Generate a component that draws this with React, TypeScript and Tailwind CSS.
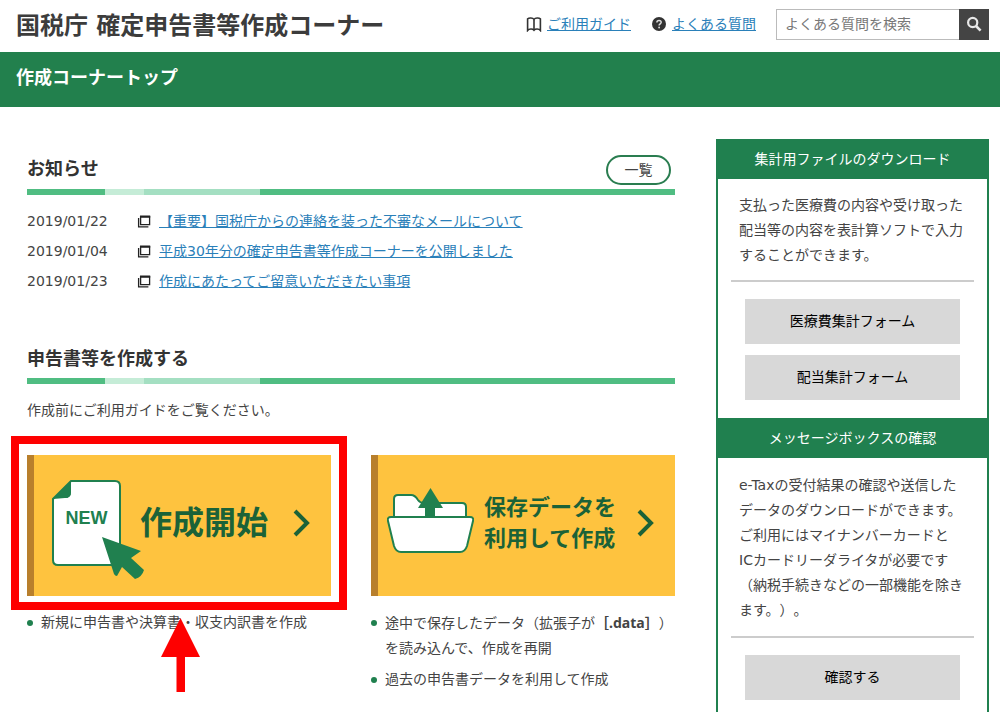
import type { ReactNode } from "react";

const notices = [
  { date: "2019/01/22", title: "【重要】国税庁からの連絡を装った不審なメールについて" },
  { date: "2019/01/04", title: "平成30年分の確定申告書等作成コーナーを公開しました" },
  { date: "2019/01/23", title: "作成にあたってご留意いただきたい事項" },
];

function BookIcon() {
  return (
    <svg width="16" height="16" viewBox="0 0 16 16" fill="none" stroke="#333" strokeWidth="1.6" aria-hidden="true">
      <path d="M8 3.4C6.8 1.7 3 1.7 1.600 2.800V14.400C3 12.600 6.800 12.600 8 14.200C9.200 12.600 13 12.600 14.400 14.400V2.800C13 1.700 9.200 1.700 8 3.400Z" />
      <path d="M8 3.400V14" />
    </svg>
  );
}

function QuestionIcon() {
  return (
    <svg width="16" height="16" viewBox="0 0 16 16" aria-hidden="true">
      <circle cx="8" cy="8" r="7" fill="#333" />
      <path d="M5.900 6.500C5.900 3.700 10.200 3.800 10.200 6.300C10.200 7.800 8.100 7.800 8.100 9.500" fill="none" stroke="#ddd" strokeWidth="1.500" />
      <circle cx="8.100" cy="11.500" r="0.900" fill="#ddd" />
    </svg>
  );
}

function SearchIcon() {
  return (
    <svg width="16" height="16" viewBox="0 0 16 16" fill="none" stroke="#e8e8e8" aria-hidden="true">
      <circle cx="6.700" cy="6.500" r="4.600" strokeWidth="2.200" />
      <path d="M10 10L14.600 14.600" strokeWidth="2.600" />
    </svg>
  );
}

function WindowIcon() {
  return (
    <svg width="14" height="14" viewBox="0 0 14 14" fill="none" stroke="#222" aria-hidden="true">
      <path d="M3.600 2.600H12.600V10.600H3.600Z" strokeWidth="1.300" />
      <path d="M3 2.600H13.200" strokeWidth="2.200" />
      <path d="M1.600 4V12.800H11.400" strokeWidth="1.300" />
    </svg>
  );
}

function NewDocumentIcon() {
  return (
    <svg width="84" height="102" viewBox="0 0 84 102" className="mt-4 shrink-0 overflow-visible" aria-hidden="true">
      <path d="M19 1H63Q68 1 68 6V80Q68 85 63 85H6Q1 85 1 80V19Z" fill="#fff" stroke="#20804f" strokeWidth="2" />
      <path d="M19 1V12Q19 18 13 18H1Q11 14 19 1Z" fill="#20804f" />
      <path d="M1 19L19 1V12Q19 18 13 18Z" fill="#20804f" />
      <text x="34.500" y="43.500" textAnchor="middle" fill="#20804f" fontSize="18" fontWeight="700" fontFamily="'Liberation Sans', sans-serif">NEW</text>
      <path d="M50 57L89 71L79 78L92 90Q90 97 83 99L70 87L65 96Q63 96 62 94Z" fill="#20804f" />
    </svg>
  );
}

function FolderIcon() {
  return (
    <svg width="87" height="66" viewBox="0 0 87 66" className="mb-1 shrink-0" aria-hidden="true">
      <path d="M7 31V11Q7 7 11 7H24Q28 7 31 12Q33 15 37 15H75Q79 15 79 19V31Z" fill="#fff" stroke="#20804f" strokeWidth="2" />
      <path d="M4 29H83Q87 29 86 33L80 58Q78 64 73 64H14Q9 64 7 58L1 33Q0 29 4 29Z" fill="#fff" stroke="#20804f" strokeWidth="2" />
      <path d="M43.500 0L56 20H48V29H38V20H31Z" fill="#20804f" />
    </svg>
  );
}

function Chevron() {
  return (
    <svg width="18" height="28" viewBox="0 0 18 28" fill="none" stroke="#1b6238" strokeWidth="4" aria-hidden="true">
      <path d="M2 2L14 14L2 26" />
    </svg>
  );
}

function SectionRule() {
  return (
    <div className="flex h-[6px] bg-[#50bd82]">
      <div className="w-[12%]" />
      <div className="w-[6%] bg-[#c5ecd7]" />
      <div className="w-[18%] bg-[#a4dfc2]" />
    </div>
  );
}

function Bullet({ children }: { children: ReactNode }) {
  return (
    <li className="flex gap-2">
      <span className="mt-[10px] size-[6px] shrink-0 rounded-full bg-[#20804f]" />
      <span className="whitespace-nowrap">{children}</span>
    </li>
  );
}

function PanelHeading({ children }: { children: ReactNode }) {
  return <h2 className="bg-[#20804f] text-center leading-[40px] text-white">{children}</h2>;
}

function PanelButton({ children }: { children: ReactNode }) {
  return (
    <button type="button" className="h-[45px] w-full bg-[#d8d8d8] text-black">
      {children}
    </button>
  );
}

export default function App() {
  return (
    <div className="flex min-h-screen flex-col bg-white font-['DejaVu_Sans','Noto_Sans_CJK_JP',sans-serif] text-[14px] text-[#444] [text-spacing-trim:space-all]">
      <header className="flex h-[52px] items-center justify-between pr-[11px] pl-4">
        <h1 className="text-[24px] font-bold whitespace-nowrap text-[#3c3c3c]">国税庁 確定申告書等作成コーナー</h1>
        <div className="flex items-center gap-5 pb-1 whitespace-nowrap">
          <a href="#guide" className="flex items-center gap-[5px] text-[#2a80b9]">
            <BookIcon />
            <span className="underline">ご利用ガイド</span>
          </a>
          <a href="#faq" className="flex items-center gap-[5px] text-[#2a80b9]">
            <QuestionIcon />
            <span className="underline">よくある質問</span>
          </a>
          <form className="flex h-[31px]">
            <input
              type="text"
              aria-label="よくある質問を検索"
              placeholder="よくある質問を検索"
              className="w-[183px] border border-r-0 border-[#bbb] px-2 placeholder:text-[#777]"
            />
            <button type="button" aria-label="検索" className="flex w-[30px] items-center justify-center bg-[#444]">
              <SearchIcon />
            </button>
          </form>
        </div>
      </header>

      <div className="h-[55px] bg-[#22804d] px-4 text-[18px] leading-[51px] font-bold text-white">作成コーナートップ</div>

      <div className="flex grow gap-[41px] pr-[11px] pl-[27px]">
        <main className="min-w-0 flex-1 pt-12">
          <section>
            <div className="mb-1 flex h-[30px] items-center justify-between pr-1">
              <h2 className="self-start text-[18px] leading-[28px] font-bold text-[#333]">お知らせ</h2>
              <button type="button" className="h-[30px] w-[65px] rounded-full border-2 border-[#2a7d50]">
                一覧
              </button>
            </div>
            <SectionRule />
            <ul className="mt-[11px] leading-[30px]">
              {notices.map((notice) => (
                <li key={notice.date} className="flex items-center">
                  <time className="w-[110px]">{notice.date}</time>
                  <WindowIcon />
                  <a href="#notice" className="ml-2 text-[#2a80b9] underline">
                    {notice.title}
                  </a>
                </li>
              ))}
            </ul>
          </section>

          <section className="mt-12">
            <h2 className="mb-1 text-[18px] leading-[30px] font-bold text-[#333]">申告書等を作成する</h2>
            <SectionRule />
            <p className="mt-3 leading-[28px]">作成前にご利用ガイドをご覧ください。</p>

            <div className="mt-[31px] grid grid-cols-2 gap-10">
              <div>
                <div className="relative">
                  <button
                    type="button"
                    className="flex h-[141px] w-full items-center border-l-[7px] border-[#b87f2c] bg-[#fec33f] pr-5 pb-[6px] pl-[18px]"
                  >
                    <NewDocumentIcon />
                    <span className="ml-1 grow text-left text-[32px] font-bold whitespace-nowrap text-[#1b6238]">作成開始</span>
                    <Chevron />
                  </button>
                  <div className="pointer-events-none absolute -inset-x-4 -top-[19px] -bottom-[14px] border-8 border-[#fe0000]" />
                  <svg className="pointer-events-none absolute top-[163px] left-[134px]" width="40" height="74" viewBox="0 0 40 74" aria-hidden="true">
                    <path d="M19.500 0L39 39H24V74H15.500V39H0Z" fill="#fe0000" />
                  </svg>
                </div>
                <ul className="mt-[14px] leading-[25px]">
                  <Bullet>新規に申告書や決算書・収支内訳書を作成</Bullet>
                </ul>
              </div>

              <div>
                <button
                  type="button"
                  className="flex h-[141px] w-full items-center border-l-[7px] border-[#b87f2c] bg-[#fec33f] pr-5 pb-[6px] pl-[9px]"
                >
                  <FolderIcon />
                  <span className="ml-[10px] grow text-left text-[22px] leading-[31px] font-bold whitespace-nowrap text-[#1b6238]">
                    保存データを
                    <br />
                    利用して作成
                  </span>
                  <Chevron />
                </button>
                <ul className="mt-[14px] flex flex-col gap-[6px] leading-[25px]">
                  <Bullet>
                    途中で保存したデータ（拡張子が
                    <b className="font-['Noto_Sans','Noto_Sans_CJK_JP',sans-serif]">［.data］</b>）
                    <br />
                    を読み込んで、作成を再開
                  </Bullet>
                  <Bullet>過去の申告書データを利用して作成</Bullet>
                </ul>
              </div>
            </div>
          </section>
        </main>

        <aside className="mt-8 w-[273px] shrink-0 border-x-2 border-[#20804f] leading-[25px]">
          <section className="pb-[18px]">
            <PanelHeading>集計用ファイルのダウンロード</PanelHeading>
            <p className="px-[21px] pt-[14px] pb-3">支払った医療費の内容や受け取った配当等の内容を表計算ソフトで入力することができます。</p>
            <hr className="mx-[13px] border-t-2 border-[#ccc]" />
            <div className="flex flex-col gap-[11px] px-[27px] pt-[17px]">
              <PanelButton>医療費集計フォーム</PanelButton>
              <PanelButton>配当集計フォーム</PanelButton>
            </div>
          </section>
          <section className="pb-3">
            <PanelHeading>メッセージボックスの確認</PanelHeading>
            <p className="px-[21px] pt-[15px] pb-[13px]">
              e-Taxの受付結果の確認や送信した
              <br />
              データのダウンロードができます。
              <br />
              ご利用にはマイナンバーカードと
              <br />
              ICカードリーダライタが必要です
              <br />
              （納税手続きなどの一部機能を除きます。）。
            </p>
            <hr className="mx-[13px] border-t-2 border-[#ccc]" />
            <div className="px-[27px] pt-[17px]">
              <PanelButton>確認する</PanelButton>
            </div>
          </section>
        </aside>
      </div>
    </div>
  );
}
